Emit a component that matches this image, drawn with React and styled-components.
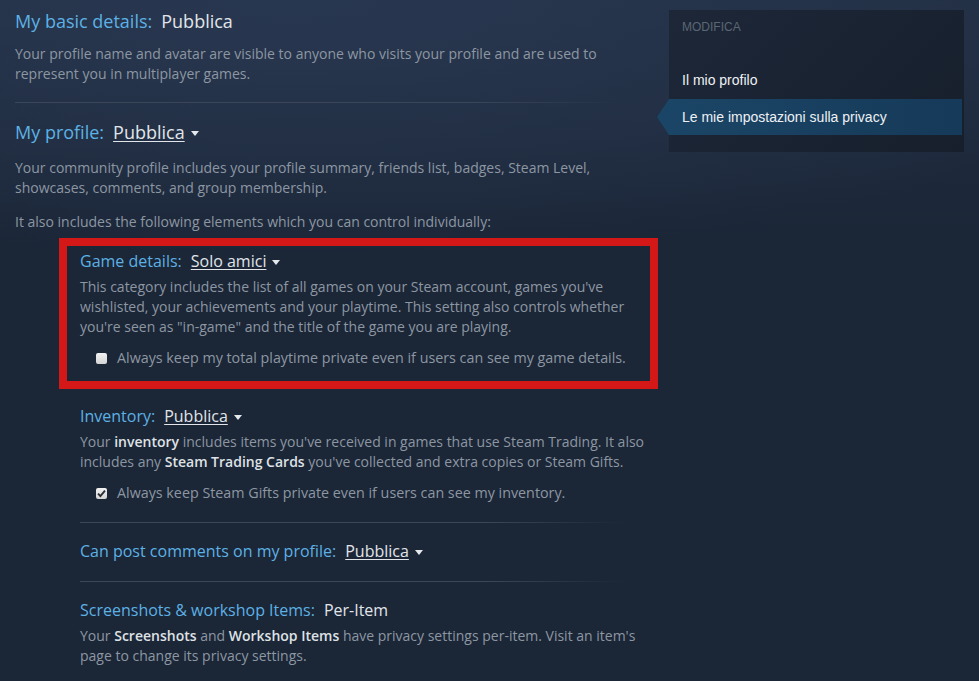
import React from "react";
import styled, {createGlobalStyle} from "styled-components";

const GlobalStyle = createGlobalStyle`
  html, body {
    margin: 0;
    padding: 0;
    background: #1b2637;
  }
  body {
    font-family: "Open Sans", "Liberation Sans", Arial, sans-serif;
  }
`

const items = [
    {
        label: "Inventory:",
        value: "Pubblica",
        dropdown: true,
        desc: <>Your <b>inventory</b> includes items you've received in games that use Steam Trading. It also includes any <b>Steam Trading Cards</b> you've collected and extra copies or Steam Gifts.</>,
        checkbox: {checked: true, text: "Always keep Steam Gifts private even if users can see my inventory."},
    },
    {
        label: "Can post comments on my profile:",
        value: "Pubblica",
        dropdown: true,
    },
    {
        label: "Screenshots & workshop Items:",
        value: "Per-Item",
        desc: <>Your <b>Screenshots</b> and <b>Workshop Items</b> have privacy settings per-item. Visit an item's page to change its privacy settings.</>,
    },
]

const Caret = () => (
    <svg width="8" height="5" viewBox="0 0 8 5">
        <path d="M0 0 L8 0 L4 5 Z" fill="#e6e9ec"/>
    </svg>
)

const Check = ({checked}) => (
    <Box>
        {checked &&
            <svg width="11" height="11" viewBox="0 0 11 11">
                <path d="M2 5.6 L4.4 8 L9 2.6" stroke="#2a2f36" strokeWidth="1.9" fill="none"/>
            </svg>
        }
    </Box>
)

const Value = ({value, dropdown}) => (
    dropdown
        ? <Dropdown><Underlined>{value}</Underlined><Caret/></Dropdown>
        : <Plain>{value}</Plain>
)

const SubItem = ({item}) => (
    <div>
        <SubTitle>
            <Label>{item.label}</Label>
            <Value value={item.value} dropdown={item.dropdown}/>
        </SubTitle>
        {item.desc && <Desc>{item.desc}</Desc>}
        {item.checkbox &&
            <CheckRow>
                <Check checked={item.checkbox.checked}/>
                <span>{item.checkbox.text}</span>
            </CheckRow>
        }
    </div>
)

export default function App() {
    return (
        <Page>
            <GlobalStyle/>
            <Main>
                <Title>
                    <Label>My basic details:</Label>
                    <Plain>Pubblica</Plain>
                </Title>
                <Text $top={11}>
                    Your profile name and avatar are visible to anyone who visits your profile and are used to represent you in multiplayer games.
                </Text>
                <Divider $top={18} $bottom={17}/>
                <Title>
                    <Label>My profile:</Label>
                    <Value value="Pubblica" dropdown/>
                </Title>
                <Text $top={14}>
                    Your community profile includes your profile summary, friends list, badges, Steam Level, showcases, comments, and group membership.
                </Text>
                <Text $top={14}>
                    It also includes the following elements which you can control individually:
                </Text>
                <SubList>
                    <Highlight>
                        <SubTitle>
                            <Label>Game details:</Label>
                            <Value value="Solo amici" dropdown/>
                        </SubTitle>
                        <Desc>
                            This category includes the list of all games on your Steam account, games you've wishlisted, your achievements and your playtime. This setting also controls whether you're seen as "in-game" and the title of the game you are playing.
                        </Desc>
                        <CheckRow>
                            <Check checked={false}/>
                            <span>Always keep my total playtime private even if users can see my game details.</span>
                        </CheckRow>
                    </Highlight>
                    <SubItem item={items[0]}/>
                    <Divider $top={19} $bottom={16}/>
                    <SubItem item={items[1]}/>
                    <Divider $top={18} $bottom={16}/>
                    <SubItem item={items[2]}/>
                </SubList>
            </Main>
            <Side>
                <SideHead>Modifica</SideHead>
                <SideLink>Il mio profilo</SideLink>
                <SideLink $active>Le mie impostazioni sulla privacy</SideLink>
            </Side>
        </Page>
    )
}

const Page = styled.div`
  display: flex;
  align-items: flex-start;
  min-height: 681px;
  background: radial-gradient(ellipse 900px 260px at 30% 0%, #283750 0%, rgba(27, 38, 55, 0) 100%),
              linear-gradient(180deg, #222f44 0px, #1b2637 240px);
  overflow: hidden;
`
const Main = styled.div`
  width: 640px;
  padding: 9px 0 0 15px;
  box-sizing: border-box;
  flex-shrink: 0;
`
const Title = styled.div`
  display: flex;
  align-items: baseline;
  gap: 9px;
  font-size: 18px;
  line-height: 24px;
`
const SubTitle = styled(Title)`
  font-size: 16px;
  gap: 9px;
`
const Label = styled.span`
  color: #5db1e4;
`
const Plain = styled.span`
  color: #e1e5e9;
`
const Dropdown = styled.span`
  display: inline-flex;
  align-items: center;
  gap: 6px;
  color: #e1e5e9;
  svg {
    margin-top: 3px;
  }
`
const Underlined = styled.span`
  text-decoration: underline;
  text-underline-offset: 2px;
  text-decoration-thickness: 1px;
`
const Text = styled.p`
  margin: ${p => p.$top || 0}px 0 0;
  color: #8d97a2;
  font-size: 14px;
  line-height: 20px;
  width: 600px;
  b {
    color: #dfe2e5;
    font-weight: 600;
  }
`
const Desc = styled(Text)`
  margin-top: 4px;
  width: 580px;
`
const Divider = styled.div`
  height: 1px;
  width: 605px;
  margin: ${p => p.$top}px 0 ${p => p.$bottom}px;
  background: linear-gradient(90deg, #3a4758 0%, #3a4758 75%, rgba(58, 71, 88, 0) 100%);
`
const SubList = styled.div`
  margin: 6px 0 0 65px;
  & > ${Divider} {
    width: 545px;
  }
`
const Highlight = styled.div`
  margin: 0 0 15px -21px;
  width: 599px;
  box-sizing: border-box;
  border: 8px solid #d41818;
  padding: 3px 0 13px 13px;
  ${Desc} {
    width: 562px;
  }
`
const CheckRow = styled.div`
  display: flex;
  align-items: center;
  gap: 10px;
  margin: 11px 0 0 16px;
  color: #8d97a2;
  font-size: 14.3px;
  line-height: 20px;
`
const Box = styled.span`
  width: 11px;
  height: 11px;
  border-radius: 2px;
  background: linear-gradient(180deg, #f2f2f2, #d4d4d4);
  display: inline-flex;
  align-items: center;
  justify-content: center;
  flex-shrink: 0;
`
const Side = styled.div`
  margin: 10px 0 0 29px;
  width: 295px;
  height: 142px;
  background: linear-gradient(135deg, #1d2738 0%, #171f2c 100%);
  padding-top: 9px;
  box-sizing: border-box;
  font-family: "Liberation Sans", Arial, sans-serif;
`
const SideHead = styled.div`
  color: #5b6674;
  font-size: 12px;
  text-transform: uppercase;
  padding-left: 13px;
  line-height: 16px;
  margin-bottom: 27px;
`
const SideLink = styled.div`
  position: relative;
  height: 36px;
  line-height: 36px;
  padding-left: 13px;
  margin: ${p => p.$active ? "1px 2px 0 0" : "0 2px 0 0"};
  font-size: 14px;
  color: #eef1f4;
  background: ${p => p.$active ? "linear-gradient(90deg, #1b4566 0%, #163a59 100%)" : "transparent"};
  &::before {
    content: "";
    display: ${p => p.$active ? "block" : "none"};
    position: absolute;
    left: -12px;
    top: 0;
    border-style: solid;
    border-width: 18px 12px 18px 0;
    border-color: transparent #1b4566 transparent transparent;
  }
`
